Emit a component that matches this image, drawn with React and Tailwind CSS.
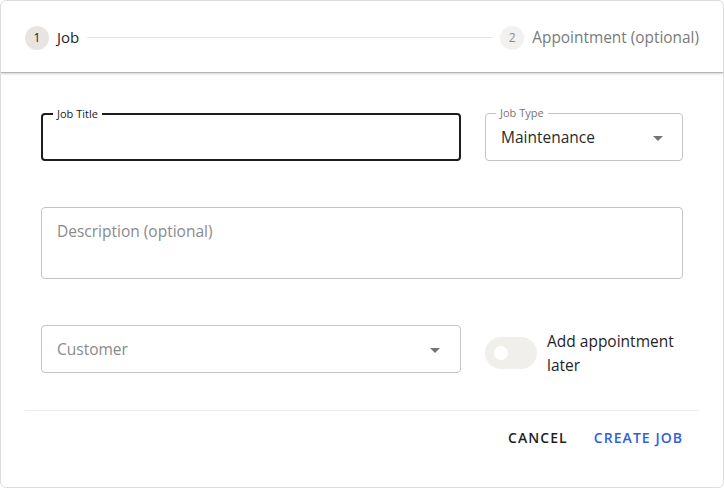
import React from "react";

const font = { fontFamily: '"Open Sans", "Noto Sans", sans-serif' };

function Caret({ color = "#757575" }) {
  return (
    <svg width="10" height="5" viewBox="0 0 10 5">
      <path d="M0 0 L10 0 L5 5 Z" fill={color} />
    </svg>
  );
}

export default function App() {
  return (
    <div className="w-[724px] h-[488px] bg-white" style={font}>
      <div className="w-[724px] h-[488px] border border-[#dcdcdc] rounded-[6px] flex flex-col overflow-hidden">
        {/* Header */}
        <div className="h-[72px] shrink-0 flex items-center pt-[2px] pl-[24px] pr-[24px] border-b border-[#b5b5b5] shadow-[0_1px_2px_rgba(0,0,0,0.18)]">
          <div className="flex items-center">
            <div className="w-[24px] h-[24px] rounded-full bg-[#e8e5e0] flex items-center justify-center text-[12px] text-[#222]">1</div>
            <span className="ml-[8px] text-[15px] text-[#1f1f1f]">Job</span>
          </div>
          <div className="flex-1 h-px bg-[#e6e6e6] mx-[8px]" />
          <div className="flex items-center">
            <div className="w-[24px] h-[24px] rounded-full bg-[#f2f1ef] flex items-center justify-center text-[12px] text-[#8a8a8a]">2</div>
            <span className="ml-[8px] text-[15.4px] text-[#7a7a7a]">Appointment (optional)</span>
          </div>
        </div>

        {/* Body */}
        <div className="flex-1 flex flex-col px-[40px] pt-[40px]">
          <div className="flex gap-[24px]">
            <div className="relative shrink-0 w-[420px] h-[48px] border-2 border-[#1c1c1c] rounded-[4px]">
              <span className="absolute left-[10px] top-[-8px] px-[4px] bg-white text-[11px] leading-[14px] text-[#222]">Job Title</span>
            </div>
            <div className="relative shrink-0 w-[198px] h-[48px] border border-[#c4c4c4] rounded-[4px] flex items-center pt-[2px] pl-[15px] pr-[19px]">
              <span className="absolute left-[10px] top-[-8px] px-[4px] bg-white text-[11px] leading-[14px] text-[#757575]">Job Type</span>
              <span className="flex-1 text-[15.5px] text-[#2a2a2a]">Maintenance</span>
              <Caret />
            </div>
          </div>

          <div className="mt-[46px] h-[72px] border border-[#c4c4c4] rounded-[4px] pl-[15px] pt-[11px]">
            <span className="text-[15.5px] text-[#8a8a8a]">Description (optional)</span>
          </div>

          <div className="mt-[46px] flex gap-[24px]">
            <div className="shrink-0 w-[420px] h-[48px] border border-[#c4c4c4] rounded-[4px] flex items-center pt-[2px] pl-[15px] pr-[20px]">
              <span className="flex-1 text-[15.5px] text-[#8a8a8a]">Customer</span>
              <Caret />
            </div>
            <div className="flex items-center mt-[4px] self-start">
              <div className="shrink-0 w-[52px] h-[32px] rounded-full bg-[#f0efec] flex items-center pl-[9px]">
                <div className="w-[14px] h-[14px] rounded-full bg-white" />
              </div>
              <div className="ml-[10px] text-[15.5px] leading-[24px] text-[#1f1f1f] w-[140px]">Add appointment later</div>
            </div>
          </div>
        </div>

        {/* Footer */}
        <div className="mx-[24px] border-t border-[#ececec]" />
        <div className="h-[76px] shrink-0 flex justify-end items-start pt-[16px] pr-[40px] gap-[26px]">
          <span className="text-[14px] font-semibold tracking-[0.075em] text-[#1f1f1f]">CANCEL</span>
          <span className="text-[14px] font-semibold tracking-[0.075em] text-[#2f62d8]">CREATE JOB</span>
        </div>
      </div>
    </div>
  );
}
